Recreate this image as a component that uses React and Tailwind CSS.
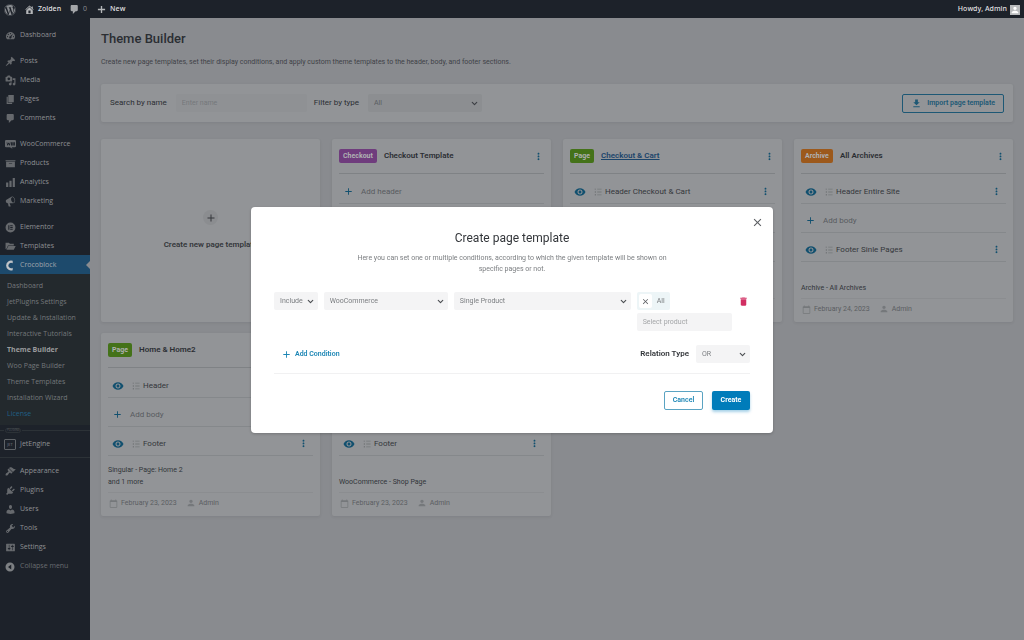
import React, { useState } from 'react';
import { FaWordpress } from 'react-icons/fa';
import { MdAdd, MdCalendarToday, MdClose, MdDelete, MdFileDownload, MdMoreVert, MdPerson, MdVisibility } from 'react-icons/md';
import { ChevronDown } from 'lucide-react';

const ICONS = {
  dashboard:
    'M3.76 17h12.48A8 8 0 1 0 3.76 17zM10 5.500a1 1 0 1 1 0 2 1 1 0 0 1 0-2zM6 7a1 1 0 1 1 0 2 1 1 0 0 1 0-2zm-1.500 4a1 1 0 1 1 0 2 1 1 0 0 1 0-2zm11 0a1 1 0 1 1 0 2 1 1 0 0 1 0-2zM14.500 7L11.500 12.500A2 2 0 1 1 9.500 11.500z',
  post: 'M10.44 3.02l1.82-1.82 6.36 6.35-1.83 1.82c-1.05-.68-2.48-.57-3.41.36l-.75.75c-.92.93-1.04 2.35-.35 3.41l-1.83 1.82-2.41-2.41-2.8 2.79c-.42.42-3.38 2.71-3.8 2.29s1.86-3.39 2.28-3.81l2.79-2.79L4.1 9.36l1.83-1.82c1.05.69 2.48.57 3.4-.36l.75-.75c.93-.92 1.05-2.35.36-3.41z',
  media:
    'M13 11V4c0-.55-.45-1-1-1h-1.670L9 1H5L3.670 3H2c-.55 0-1 .45-1 1v7c0 .55.45 1 1 1h10c.55 0 1-.45 1-1zM7 4.500c1.380 0 2.500 1.120 2.500 2.500S8.380 9.500 7 9.500 4.500 8.380 4.500 7 5.620 4.500 7 4.500zM14 6h5v10.500c0 1.380-1.120 2.500-2.500 2.500S14 17.880 14 16.500s1.120-2.500 2.500-2.500c.17 0 .34.02.5.05V9h-3V6zm-4 8.050V13h2v3.500c0 1.380-1.120 2.500-2.500 2.500S7 17.880 7 16.500 8.120 14 9.500 14c.17 0 .34.02.5.05z',
  page: 'M6 15V2h10v13H6zm-1 1h8v2H3V5h2v11z',
  comment: 'M5 2h9c1.100 0 2 .9 2 2v7c0 1.100-.9 2-2 2h-2l-5 5v-5H5c-1.100 0-2-.9-2-2V4c0-1.100.9-2 2-2z',
  woo: 'M2 2h16a2 2 0 0 1 2 2v9a2 2 0 0 1-2 2h-6l2 3-5-3H2a2 2 0 0 1-2-2V4a2 2 0 0 1 2-2zM3 6l1 6h1l1.500-3L8 12h1l1-6H9l-.6 3L7 7H6L4.700 9 4 6zM11 6v6h3V6zM15 6v6h3V6z',
  archive: 'M19 4v2H1V4h18zM2 7h16v10H2V7zm11 3V9H7v1h6z',
  chart: 'M18 18V2h-4v16h4zm-6 0V7H8v11h4zm-6 0v-8H2v8h4z',
  megaphone:
    'M18.150 5.940c.46 1.620.38 3.220-.02 4.480-.42 1.280-1.260 2.180-2.300 2.480-.16.06-.26.06-.4.06-.06.02-.12.02-.18.02-.06.02-.14.02-.22.02h-6.800l2.220 5.500c.02.14-.06.26-.14.34-.08.1-.24.16-.34.16H6.950c-.1 0-.26-.06-.34-.16-.08-.08-.16-.2-.14-.34l-1-5.500H4.250l-.02-.02c-.5.06-1.080-.18-1.540-.62s-.88-1.080-1.060-1.880c-.24-.8-.2-1.560-.02-2.200.18-.62.58-1.080 1.060-1.300l.02-.02 9-5.400c.1-.06.18-.1.24-.16.06-.04.14-.08.24-.12.16-.08.28-.12.5-.18 1.040-.3 2.240.1 3.220.98s1.840 2.240 2.260 3.860zm-2.580 5.980h-.02c.4-.1.74-.34 1.040-.7.58-.7.86-1.760.86-3.040 0-.64-.1-1.300-.28-1.980-.34-1.360-1.020-2.500-1.780-3.240s-1.680-1.100-2.460-.88c-.82.22-1.400.96-1.700 2-.32 1.040-.28 2.360.06 3.720.38 1.360 1 2.500 1.800 3.240.78.74 1.620 1.100 2.480.88z',
  elementor: 'M10 1a9 9 0 1 1 0 18 9 9 0 0 1 0-18zM6 6v8h2V6zm3.500 0v1.600H14V6zm0 3.200v1.600H14V9.200zm0 3.200V14H14v-1.600z',
  folder: 'M1 3h6l2 2h7v3H5.500L3 13.500 1 15zM6.300 9H19.500L16 16H2.500z',
  croco: 'M14 1.500v4.300a5 5 0 1 0 0 8.400v4.300A9 9 0 1 1 14 1.500z',
  appearance:
    'M14.480 11.060L7.410 3.990l1.500-1.500c.5-.56 2.300-.47 3.510.32 1.210.8 1.430 1.280 2.910 2.100 1.180.64 2.450 1.260 4.450.85zm-.71.71L6.700 4.700 4.930 6.470c-.39.39-.39 1.020 0 1.410l1.060 1.060c.39.39.39 1.030 0 1.420-.6.6-1.430 1.110-2.210 1.690-.35.26-.7.53-1.010.84C1.430 14.230.4 16.080 1.400 17.070c.99 1 2.840-.03 4.180-1.360.31-.31.58-.66.85-1.020.57-.78 1.080-1.610 1.690-2.210.39-.39 1.020-.39 1.410 0l1.060 1.060c.39.39 1.020.39 1.410 0z',
  plugins:
    'M13.110 4.360L9.870 7.600 8 5.730l3.240-3.240c.35-.34 1.050-.2 1.560.32.52.51.66 1.210.31 1.550zm-8 1.770l.91-1.120 9.010 9.010-1.190.84c-.71.71-2.630 1.160-3.820 1.160H6.140L4.900 17.260c-.59.59-1.540.59-2.120 0-.59-.58-.59-1.530 0-2.120l1.240-1.240v-3.880c0-1.130.4-3.190 1.090-3.890zm7.260 3.970l3.240-3.240c.34-.35 1.040-.21 1.550.31.52.51.66 1.210.31 1.550l-3.240 3.250z',
  users:
    'M10 9.250c-2.270 0-2.730-3.440-2.730-3.440C7 4.020 7.820 2 9.970 2c2.160 0 2.980 2.020 2.710 3.810 0 0-.41 3.440-2.680 3.440zm0 2.570L12.720 10c2.390 0 4.520 2.330 4.520 4.530v2.490s-3.650 1.130-7.240 1.130c-3.650 0-7.240-1.130-7.240-1.130v-2.490c0-2.250 1.940-4.480 4.470-4.480z',
  tools:
    'M16.680 9.770c-1.340 1.340-3.300 1.670-4.950.99l-5.410 6.520c-.99.99-2.590.99-3.580 0s-.99-2.590 0-3.570l6.520-5.420c-.68-1.650-.35-3.610.99-4.950 1.280-1.280 3.120-1.620 4.720-1.060l-2.890 2.890 2.820 2.820 2.860-2.870c.53 1.580.18 3.390-1.080 4.650zM3.810 16.210c.4.39 1.040.39 1.430 0 .4-.4.4-1.040 0-1.430-.39-.4-1.030-.4-1.430 0-.39.39-.39 1.030 0 1.430z',
  settings:
    'M18 16V4c0-.55-.45-1-1-1H3c-.55 0-1 .45-1 1v12c0 .55.45 1 1 1h14c.55 0 1-.45 1-1zM8 11h1c.55 0 1 .45 1 1s-.45 1-1 1H8v1.500c0 .28-.22.5-.5.5s-.5-.22-.5-.5V13H6c-.55 0-1-.45-1-1s.45-1 1-1h1V5.500c0-.28.22-.5.5-.5s.5.22.5.5V11zm5-2h-1c-.55 0-1-.45-1-1s.45-1 1-1h1V5.500c0-.28.22-.5.5-.5s.5.22.5.5V7h1c.55 0 1 .45 1 1s-.45 1-1 1h-1v5.500c0 .28-.22.5-.5.5s-.5-.22-.5-.5V9z',
  collapse: 'M10 1a9 9 0 1 1 0 18 9 9 0 0 1 0-18zM12.500 5v10L6 10z',
  home: 'M16 8.500l1.530 1.530-1.060 1.060L10 4.600l-6.470 6.490-1.060-1.060L10 2.500l4 4v-2h2v4zm-6-2.460l6 5.990V18H4v-5.970zM12 17v-5H8v5h4z',
  plus: 'M18 8.500v3h-6.500V18h-3v-6.500H2v-3h6.500V2h3v6.500z',
  list: 'M2 1h2v4H2zM2 8h3v4H2zM2 15h3v4H2zM8 2h11v2H8zM8 9h11v2H8zM8 16h11v2H8z',
};

const MENU_GROUPS = [
  [{ icon: 'dashboard', label: 'Dashboard' }],
  [
    { icon: 'post', label: 'Posts' },
    { icon: 'media', label: 'Media' },
    { icon: 'page', label: 'Pages' },
    { icon: 'comment', label: 'Comments' },
  ],
  [
    { icon: 'woo', label: 'WooCommerce' },
    { icon: 'archive', label: 'Products' },
    { icon: 'chart', label: 'Analytics' },
    { icon: 'megaphone', label: 'Marketing' },
  ],
  [
    { icon: 'elementor', label: 'Elementor' },
    { icon: 'folder', label: 'Templates' },
    { icon: 'croco', label: 'Crocoblock', active: true },
  ],
];

const SUBMENU = [
  'Dashboard',
  'JetPlugins Settings',
  'Update & Installation',
  'Interactive Tutorials',
  'Theme Builder',
  'Woo Page Builder',
  'Theme Templates',
  'Installation Wizard',
  'License',
];

const SUBMENU_STYLES = {
  'Theme Builder': 'font-bold text-[#9a9b9d]',
  License: 'text-[#205f85]',
};

const BOTTOM_MENU = [
  { icon: 'appearance', label: 'Appearance' },
  { icon: 'plugins', label: 'Plugins' },
  { icon: 'users', label: 'Users' },
  { icon: 'tools', label: 'Tools' },
  { icon: 'settings', label: 'Settings' },
];

const BADGES = {
  Checkout: 'bg-[#6f3c7d]',
  Page: 'bg-[#447219]',
  Archive: 'bg-[#9c591c]',
};

const TEMPLATES = [
  {
    id: 1,
    type: 'Checkout',
    title: 'Checkout Template',
    header: null,
    body: 'Checkout',
    footer: null,
    conditions: ['WooCommerce - Checkout'],
    date: 'February 24, 2023',
  },
  {
    id: 2,
    type: 'Page',
    title: 'Checkout & Cart',
    linked: true,
    header: 'Header Checkout & Cart',
    body: null,
    footer: 'Footer',
    conditions: ['Singular - Page: Cart'],
    date: 'February 24, 2023',
  },
  {
    id: 3,
    type: 'Archive',
    title: 'All Archives',
    header: 'Header Entire Site',
    body: null,
    footer: 'Footer Sinle Pages',
    conditions: ['Archive - All Archives'],
    date: 'February 24, 2023',
  },
  {
    id: 4,
    type: 'Page',
    title: 'Home & Home2',
    header: 'Header',
    body: null,
    footer: 'Footer',
    conditions: ['Singular - Page: Home 2', 'and 1 more'],
    date: 'February 23, 2023',
  },
  {
    id: 5,
    type: 'Page',
    title: 'Shop',
    header: 'Header',
    body: null,
    footer: 'Footer',
    conditions: ['WooCommerce - Shop Page'],
    date: 'February 23, 2023',
  },
];

function Icon({ name, className = '' }) {
  return (
    <svg viewBox="0 0 20 20" fill="currentColor" fillRule="evenodd" className={`shrink-0 ${className}`}>
      <path d={ICONS[name]} />
    </svg>
  );
}

function AdminBar() {
  return (
    <header className="flex h-[18px] items-center bg-[#1d222a] px-1 pt-px font-['Open_Sans',sans-serif] text-[7px] font-semibold text-[#dcdcde]">
      <a href="#wp" aria-label="About WordPress" className="text-[#8b8e92]">
        <FaWordpress size={12} />
      </a>
      <a href="#site" className="ml-2 flex items-center gap-[3px]">
        <Icon name="home" className="size-[11px] text-[#b4b6b8]" />
        Zolden
      </a>
      <a href="#comments" className="ml-2 flex items-center gap-[3px] font-normal text-[#8b8e92]">
        <Icon name="comment" className="size-[11px] text-[#a4a6a9]" />
        0
      </a>
      <a href="#new" className="ml-[10px] flex items-center gap-1">
        <Icon name="plus" className="size-[9px] text-[#b4b6b8]" />
        New
      </a>
      <a href="#profile" className="ml-auto flex items-center gap-[3px]">
        Howdy, Admin
        <span className="flex size-[10px] items-center justify-center bg-[#b9bbbd] text-white">
          <MdPerson size={10} />
        </span>
      </a>
    </header>
  );
}

function MenuItem({ icon, label, active }) {
  return (
    <li>
      <a
        href={`#${label.toLowerCase()}`}
        className={`relative flex h-[19px] items-center gap-1 pt-px pl-1 ${active ? 'bg-[#1d4a6c] text-[#a0a6ac]' : ''}`}
      >
        <span className={`flex w-3 justify-center ${active ? 'text-[#c0c4c8]' : 'text-[#66696d]'}`}>
          <Icon name={icon} className="size-[11px]" />
        </span>
        {label}
        {active && (
          <span className="absolute right-0 border-y-4 border-r-4 border-y-transparent border-r-[#898b8f]" />
        )}
      </a>
    </li>
  );
}

function Sidebar() {
  return (
    <nav className="w-[90px] shrink-0 bg-[#1d222a] pt-[7px] font-['Open_Sans',sans-serif] text-[7px] font-medium text-[#8e9093]">
      <div className="space-y-[7px]">
        {MENU_GROUPS.map((group) => (
          <ul key={group[0].label}>
            {group.map((item) => (
              <MenuItem key={item.label} {...item} />
            ))}
          </ul>
        ))}
      </div>
      <ul className="bg-[#23292d] pt-1 pb-[3px] pl-[7px]">
        {SUBMENU.map((label) => (
          <li key={label}>
            <a
              href="#submenu"
              className={`flex h-4 items-center ${SUBMENU_STYLES[label] || 'font-normal text-[#74787b]'}`}
            >
              {label}
            </a>
          </li>
        ))}
      </ul>
      {/* Plugin section */}
      <div className="flex h-[11px] items-center gap-px">
        <span className="w-1 border-t border-[#2c3237]" />
        <span className="rounded-sm border border-[#2c3237] px-px text-[3px] leading-[3px] text-[#55595d]">PLUGINS</span>
        <span className="flex-1 border-t border-[#2c3237]" />
      </div>
      <a href="#jetengine" className="flex h-[22px] items-center gap-1 border-b border-[#2c3237] pb-1 pl-1">
        <span className="flex h-[11px] w-3 items-center justify-center rounded-[1px] border border-[#5f6367] text-[4px] leading-none text-[#7b7e82]">
          JET
        </span>
        JetEngine
      </a>
      <ul className="mt-[3px]">
        {BOTTOM_MENU.map((item) => (
          <MenuItem key={item.label} {...item} />
        ))}
      </ul>
      <button type="button" className="flex h-[20px] items-center gap-1 pt-px pl-1 font-normal text-[#696c70]">
        <span className="flex w-3 justify-center text-[#7d8083]">
          <Icon name="collapse" className="size-[10px]" />
        </span>
        Collapse menu
      </button>
    </nav>
  );
}

function Select({ label, options, tone = 'light', className = '' }) {
  return (
    <div className={`relative ${className}`}>
      <select
        aria-label={label}
        className={`block h-[18px] w-full appearance-none rounded-[2px] pr-[11px] pl-[6px] text-[7px] ${
          tone === 'dark' ? 'bg-[#8c8e91] text-[#5a5d61]' : 'bg-[#f4f4f5] text-[#7b7e81]'
        }`}
      >
        {options.map((option) => (
          <option key={option}>{option}</option>
        ))}
      </select>
      <ChevronDown
        size={9}
        strokeWidth={3}
        className={`pointer-events-none absolute top-[5px] right-[3px] ${tone === 'dark' ? 'text-[#3c3f44]' : 'text-[#4b4e52]'}`}
      />
    </div>
  );
}

function Toolbar() {
  const [name, setName] = useState('');

  return (
    <div className="mt-[16px] flex h-[38px] items-center rounded-[2px] bg-[#929497] px-[9px] shadow-[0_1px_3px_rgba(35,40,45,0.1)]">
      <label htmlFor="search-name" className="text-[8px] text-[#2b2e33]">
        Search by name
      </label>
      <input
        id="search-name"
        value={name}
        onChange={(e) => setName(e.target.value)}
        placeholder="Enter name"
        className="ml-[9px] h-[18px] w-[131px] rounded-[2px] bg-[#8f9194] px-[6px] text-[7px] placeholder:text-[#75787b]"
      />
      <span className="ml-[7px] text-[8px] text-[#2b2e33]">Filter by type</span>
      <Select label="Filter by type" tone="dark" options={['All', 'Page', 'Archive', 'Checkout']} className="ml-[9px] w-[114px]" />
      <button
        type="button"
        className="ml-auto flex h-[19px] items-center gap-[5px] rounded-[2px] border border-[#1d5875] px-[8px] text-[7px] font-semibold text-[#1d5875]"
      >
        <MdFileDownload size={11} />
        Import page template
      </button>
    </div>
  );
}

function PartRow({ part, name }) {
  return (
    <li className="flex h-[29px] items-center border-b border-[#85888b] pt-[5px] pr-[6px] pl-1">
      {name ? (
        <>
          <button type="button" aria-label={`Preview ${part}`} className="text-[#12506f]">
            <MdVisibility size={12} />
          </button>
          <Icon name="list" className="ml-2 size-[8px] text-[#75787b]" />
          <span className="ml-[3px] text-[#34373b]">{name}</span>
          <button type="button" aria-label={`${part} actions`} className="ml-auto -mr-[2px] text-[#12506f]">
            <MdMoreVert size={11} />
          </button>
        </>
      ) : (
        <button type="button" className="flex items-center gap-[7px] text-[#585b5f]">
          <MdAdd size={11} className="text-[#12506f]" />
          Add {part}
        </button>
      )}
    </li>
  );
}

function TemplateCard({ template }) {
  return (
    <article className="flex h-[183px] flex-col rounded-[2px] bg-[#929497] px-[7px] text-[8px] shadow-[0_1px_3px_rgba(35,40,45,0.1)]">
      <div className="flex h-[35px] items-center border-b border-[#7f8285]">
        <span className={`flex h-[14px] items-center rounded-[2px] px-[4px] text-[7px] font-bold text-[#aeb0b2] ${BADGES[template.type]}`}>
          {template.type}
        </span>
        {template.linked ? (
          <a href="#template" className="ml-[7px] font-semibold text-[#1c456b] underline">
            {template.title}
          </a>
        ) : (
          <h3 className="ml-[7px] font-semibold text-[#2b2e33]">{template.title}</h3>
        )}
        <button type="button" aria-label="Template actions" className="ml-auto text-[#12506f]">
          <MdMoreVert size={11} />
        </button>
      </div>
      <ul className="pt-px">
        <PartRow part="header" name={template.header} />
        <PartRow part="body" name={template.body} />
        <PartRow part="footer" name={template.footer} />
      </ul>
      <div className="flex flex-1 flex-col justify-end pb-1 text-[7px] leading-[12px] text-[#313439]">
        {template.conditions.map((condition) => (
          <p key={condition}>{condition}</p>
        ))}
      </div>
      <div className="flex h-[24px] items-center border-t border-[#8b8d90] pb-[3px] pl-px text-[7px] text-[#5b5e62]">
        <MdCalendarToday size={9} className="text-[#75787b]" />
        <span className="ml-[3px]">{template.date}</span>
        <MdPerson size={10} className="ml-[9px] text-[#75787b]" />
        <span className="ml-[3px]">Admin</span>
      </div>
    </article>
  );
}

function CreateTemplateModal() {
  const [tags, setTags] = useState(['All']);

  return (
    <div className="fixed inset-0 flex items-center justify-center">
      <div
        role="dialog"
        aria-labelledby="modal-title"
        className="relative w-[522px] rounded-[4px] bg-white px-[23px] pt-[24px] pb-[23px] text-[7px] shadow-[0_1px_3px_rgba(0,0,0,0.2)]"
      >
        <button type="button" aria-label="Close" className="absolute top-[9px] right-[9px] text-[#5c5f63]">
          <MdClose size={13} />
        </button>
        <h2 id="modal-title" className="text-center text-[12px] leading-[14px] text-[#33363a]">
          Create page template
        </h2>
        <p className="mx-auto mt-[8px] w-[326px] text-center leading-[11px] text-[#7b7e81]">
          Here you can set one or multiple conditions, according to which the given template will be shown on specific pages or not.
        </p>

        {/* Condition row */}
        <div className="mt-[17px] flex items-start gap-[6px] pr-px">
          <Select label="Rule" options={['Include', 'Exclude']} className="w-[44px]" />
          <Select label="Section" options={['WooCommerce', 'Singular', 'Archive']} className="w-[125px]" />
          <Select label="Condition" options={['Single Product', 'Shop Page']} className="w-[178px]" />
          <div className="w-[96px]">
            {tags.map((tag) => (
              <span key={tag} className="flex h-[18px] w-fit items-center gap-[5px] rounded-[2px] bg-[#edf5f7] py-[2px] pr-[5px] pl-[2px] text-[#7b7e81]">
                <button
                  type="button"
                  aria-label={`Remove ${tag}`}
                  onClick={() => setTags(tags.filter((t) => t !== tag))}
                  className="flex h-full w-[13px] items-center justify-center rounded-[2px] bg-white text-[#5c5f63]"
                >
                  <MdClose size={9} />
                </button>
                {tag}
              </span>
            ))}
            <input
              aria-label="Select product"
              placeholder="Select product"
              className="mt-[3px] block h-[18px] w-full rounded-[2px] bg-[#f4f4f5] px-[6px] placeholder:text-[#a4a6a8]"
            />
          </div>
          <button type="button" aria-label="Delete condition" className="ml-auto flex h-[18px] items-center text-[#d12e62]">
            <MdDelete size={11} />
          </button>
        </div>

        <div className="mt-[14px] flex items-center justify-between border-b border-[#f1f1f2] pb-[10px]">
          <button type="button" className="ml-[7px] flex items-center gap-[3px] font-semibold text-[#1c86b5]">
            <MdAdd size={11} />
            Add Condition
          </button>
          <div className="flex items-center gap-[7px]">
            <span className="text-[8px] font-semibold text-[#33363a]">Relation Type</span>
            <Select label="Relation Type" options={['OR', 'AND']} className="w-[54px]" />
          </div>
        </div>

        <div className="mt-[17px] flex justify-end gap-[9px]">
          <button type="button" className="h-[19px] w-[39px] rounded-[2px] border border-[#5aa3c2] font-semibold text-[#1c86b5]">
            Cancel
          </button>
          <button
            type="button"
            className="h-[19px] w-[38px] rounded-[2px] bg-[#007cba] font-bold text-white shadow-[0_2px_3px_rgba(0,124,186,0.35)]"
          >
            Create
          </button>
        </div>
      </div>
    </div>
  );
}

export default function App() {
  return (
    <div className="flex min-h-screen flex-col bg-[#898b8f] font-['Roboto',sans-serif]">
      <AdminBar />
      <div className="flex flex-1">
        <Sidebar />
        <main className="min-w-0 flex-1 px-[11px] pt-3">
          <h1 className="text-[13px] leading-[18px] font-medium text-[#2b2e33]">Theme Builder</h1>
          <p className="mt-2 text-[7px] leading-[12px] text-[#3f4247]">
            Create new page templates, set their display conditions, and apply custom theme templates to the header, body, and footer sections.
          </p>
          <Toolbar />
          <div className="mt-[17px] grid grid-cols-4 gap-x-3 gap-y-[11px]">
            <button
              type="button"
              className="flex h-[183px] flex-col items-center justify-center gap-[14px] rounded-[2px] bg-[#929497] text-[8px] font-semibold text-[#34373b] shadow-[0_1px_3px_rgba(35,40,45,0.1)]"
            >
              <span className="flex size-[15px] items-center justify-center rounded-full bg-[#8b8d90]">
                <MdAdd size={12} />
              </span>
              Create new page template
            </button>
            {TEMPLATES.map((template) => (
              <TemplateCard key={template.id} template={template} />
            ))}
          </div>
        </main>
      </div>
      <CreateTemplateModal />
    </div>
  );
}
